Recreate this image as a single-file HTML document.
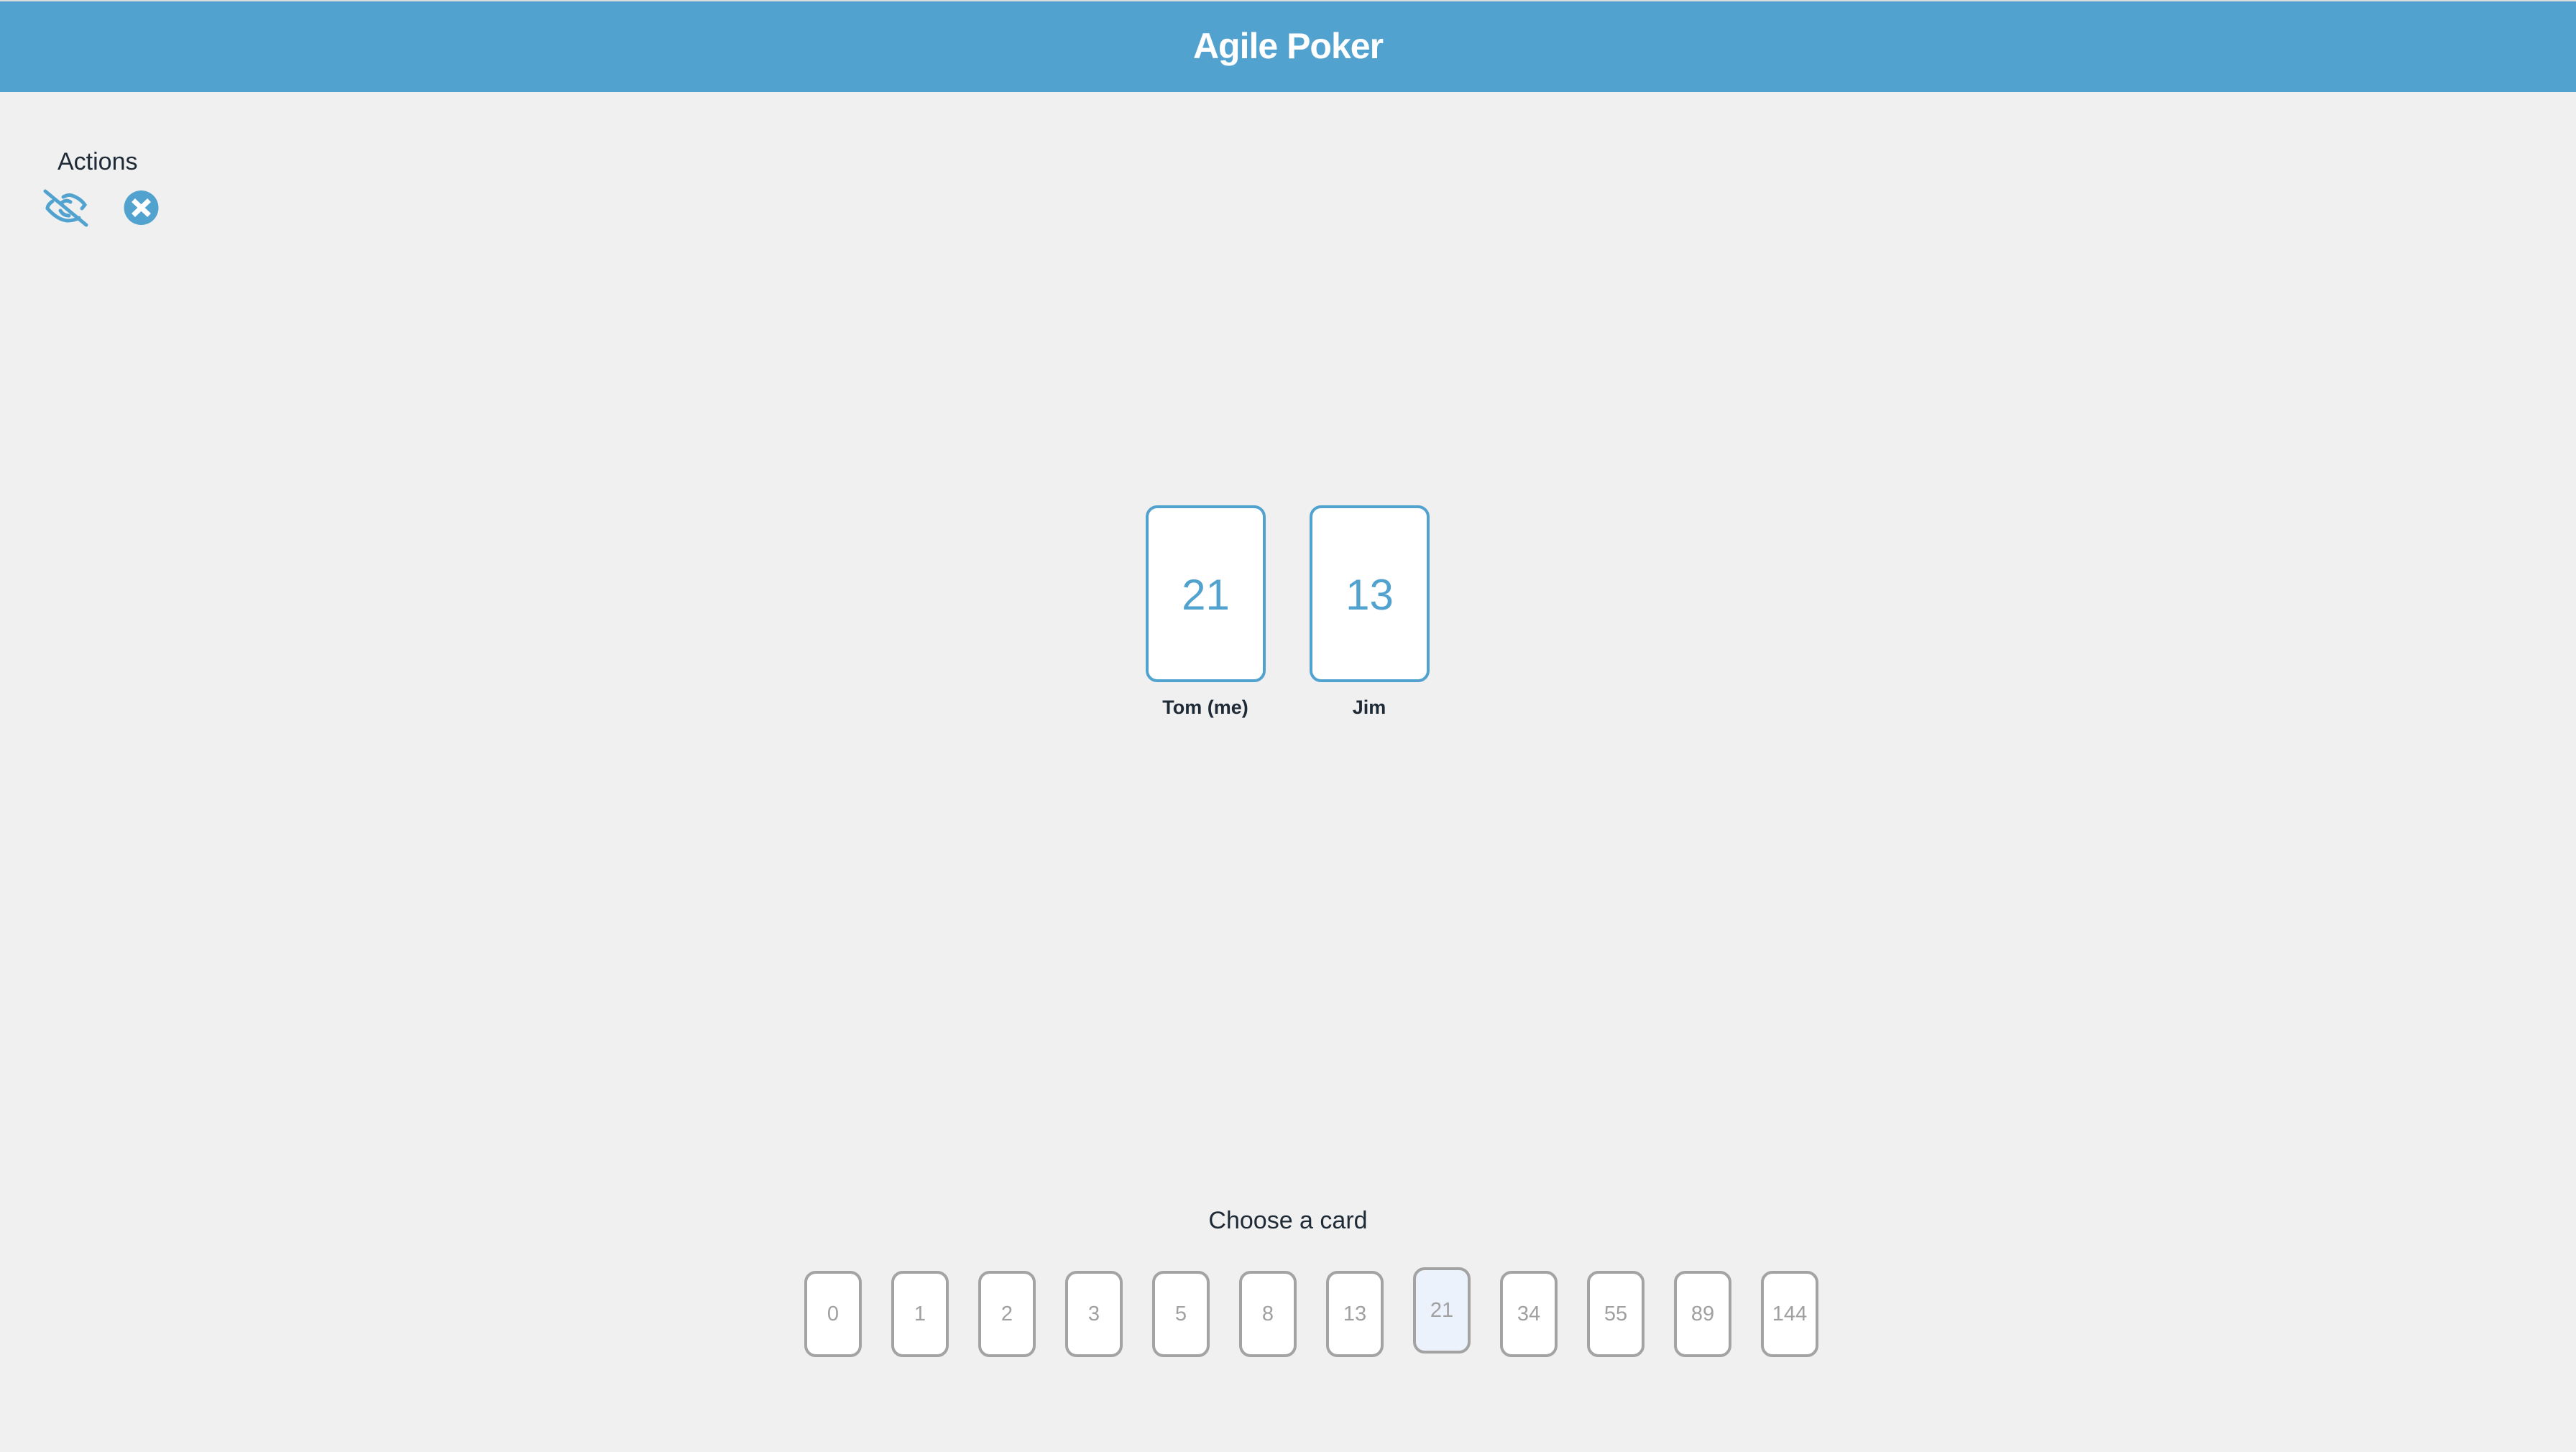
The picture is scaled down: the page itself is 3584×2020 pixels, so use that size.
<!DOCTYPE html>
<html><head><meta charset="utf-8"><style>
html,body{margin:0;padding:0}
body{width:3584px;height:2020px;background:#f0f0f0;position:relative;overflow:hidden;font-family:"Liberation Sans",Arial,sans-serif}
.top{position:absolute;left:0;top:0;width:3584px;height:2px;background:#dcdcdc}
.hdr{position:absolute;left:0;top:2px;width:3584px;height:126px;background:#52a2d0}
.title{position:absolute;left:0;width:3584px;top:29px;text-align:center;color:#fff;font-weight:bold;font-size:50px;letter-spacing:-1px;line-height:70px}
.abs{position:absolute}
.big{position:absolute;top:703px;width:159px;height:238px;border:4px solid #52a2d0;border-radius:16px;background:#fff;color:#52a2d0;font-size:60px;text-align:center;line-height:242px}
.name{position:absolute;top:964px;width:200px;text-align:center;font-weight:bold;font-size:27px;color:#1e2a36;line-height:40px}
.c{position:absolute;top:1768px;width:72px;height:112px;border:4px solid #a3a3a3;border-radius:16px;background:#fff;color:#a0a0a0;font-size:29px;text-align:center;line-height:112px}
</style></head><body>
<div class="top"></div>
<div class="hdr"></div>
<div class="title">Agile Poker</div>
<div class="abs" style="left:80px;top:203px;font-size:34px;color:#1e2a36;line-height:44px">Actions</div>
<svg class="abs" style="left:56px;top:260px" width="72" height="60" viewBox="56 260 72 60">
<g fill="none" stroke="#52a2d0" stroke-width="5" stroke-linecap="round">
<path d="M73 280 Q66 285 66 290 Q80 306 94 307 Q103 307 110 303"/>
<path d="M88 274 Q95 270 100 272 Q112 276 118 285 L114 290"/>
<path d="M86 282 Q92 277 98 281"/>
<path d="M84 293 Q88 300 96 300"/>
<path d="M63 266 L120 313"/>
</g></svg>
<svg class="abs" style="left:172px;top:265px" width="50" height="50" viewBox="0 0 50 50">
<circle cx="24.5" cy="24" r="24" fill="#52a2d0"/>
<path d="M16 16 L33 32 M33 16 L16 32" stroke="#fff" stroke-width="7" stroke-linecap="square"/>
</svg>
<div class="big" style="left:1594px">21</div>
<div class="big" style="left:1822px">13</div>
<div class="name" style="left:1577px">Tom (me)</div>
<div class="name" style="left:1805px">Jim</div>
<div class="abs" style="left:0;width:3584px;top:1676px;text-align:center;font-size:34px;color:#1e2a36;line-height:44px">Choose a card</div>
<div class="c" style="left:1119px">0</div>
<div class="c" style="left:1240px">1</div>
<div class="c" style="left:1361px">2</div>
<div class="c" style="left:1482px">3</div>
<div class="c" style="left:1603px">5</div>
<div class="c" style="left:1724px">8</div>
<div class="c" style="left:1845px">13</div>
<div class="c" style="left:1966px;top:1763px;background:#ebf2fb">21</div>
<div class="c" style="left:2087px">34</div>
<div class="c" style="left:2208px">55</div>
<div class="c" style="left:2329px">89</div>
<div class="c" style="left:2450px">144</div>
</body></html>
